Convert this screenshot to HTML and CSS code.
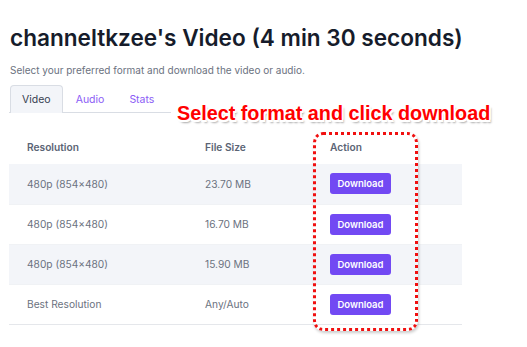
FILE: index.html
```html
<!DOCTYPE html>
<html lang="en">
  <head>
    <meta charset="UTF-8" />
    <title>channeltkzee's Video</title>
    <link rel="stylesheet" href="styles.css">
  </head>
  <body>
    <div class="page">
      <h1 class="title">channeltkzee's Video (4 min 30 seconds)</h1>
      <p class="subtitle">Select your preferred format and download the video or audio.</p>

      <div class="tabs">
        <span class="tab active">Video</span>
        <span class="tab">Audio</span>
        <span class="tab">Stats</span>
      </div>

      <table class="formats">
        <thead>
          <tr>
            <th class="col-res">Resolution</th>
            <th class="col-size">File Size</th>
            <th class="col-action">Action</th>
          </tr>
        </thead>
        <tbody>
          <tr class="striped">
            <td>480p (854×480)</td>
            <td>23.70 MB</td>
            <td><button class="btn">Download</button></td>
          </tr>
          <tr>
            <td>480p (854×480)</td>
            <td>16.70 MB</td>
            <td><button class="btn">Download</button></td>
          </tr>
          <tr class="striped">
            <td>480p (854×480)</td>
            <td>15.90 MB</td>
            <td><button class="btn">Download</button></td>
          </tr>
          <tr>
            <td>Best Resolution</td>
            <td>Any/Auto</td>
            <td><button class="btn">Download</button></td>
          </tr>
        </tbody>
      </table>

      <!-- annotation overlay -->
      <div class="callout">Select format and click download</div>
      <div class="highlight"></div>
    </div>
  </body>
</html>
```

FILE: styles.css
```css
* {
  box-sizing: border-box;
}

body {
  margin: 0;
  padding: 0;
  background: #ffffff;
  font-family: Inter, "Noto Sans", sans-serif;
}

.page {
  position: relative;
  padding: 23px 0 0 9px;
  width: 527px;
  height: 347px;
}

.title {
  margin: 0 0 0 1px;
  font-size: 22.6px;
  font-weight: 600;
  color: #161c2b;
  line-height: 30px;
}

.subtitle {
  margin: 10px 0 0 1px;
  font-size: 10px;
  color: #6b7280;
  line-height: 14px;
}

.tabs {
  display: flex;
  margin-top: 8px;
  width: 453px;
  border-bottom: 1px solid #d9dde4;
}

.tab {
  height: 28px;
  padding: 0 11px;
  display: flex;
  align-items: center;
  font-size: 10.5px;
  color: #8b5cf6;
  border: 1px solid transparent;
  border-bottom: none;
  margin-bottom: -1px;
}

.tab + .tab {
  padding-left: 12px;
}

.tab.active {
  margin-left: 1px;
  color: #374151;
  background: #f3f5f9;
  border-color: #d9dde4;
  border-radius: 4px 4px 0 0;
}

.formats {
  margin-top: 16px;
  width: 453px;
  table-layout: fixed;
  border-collapse: collapse;
  font-size: 10.2px;
  color: #6b7280;
}

.formats th,
.formats td {
  padding: 0 0 0 18px;
  text-align: left;
}

.formats th {
  height: 35px;
  font-weight: 600;
  color: #5b6475;
}

.formats td {
  height: 40px;
}

.col-res {
  width: 178px;
}

.col-size {
  width: 125px;
}

.col-action {
  width: 150px;
}

.formats tbody tr {
  border-bottom: 1px solid #f0f2f5;
}

.formats tbody tr:last-child {
  border-bottom: 1px solid #e5e7eb;
}

.formats tr.striped {
  background: #f3f5f9;
}

.btn {
  display: block;
  width: 61px;
  height: 21px;
  border: none;
  border-radius: 3px;
  background: #7249f3;
  color: #ffffff;
  font-family: Inter, "Noto Sans", sans-serif;
  font-size: 9.5px;
  font-weight: 600;
  padding: 0;
}

.callout {
  position: absolute;
  left: 171px;
  top: 100px;
  padding: 2px 6px;
  background: #ffffff;
  font-family: "Liberation Sans", Arial, sans-serif;
  font-weight: 700;
  font-size: 19.8px;
  line-height: 23px;
  color: #ff0000;
  text-shadow:
    -1.5px 0 #fff, 1.5px 0 #fff, 0 -1.5px #fff, 0 1.5px #fff,
    -1.5px -1.5px #fff, 1.5px 1.5px #fff, -1.5px 1.5px #fff, 1.5px -1.5px #fff,
    2px 2.5px 2px rgba(0, 0, 0, 0.35);
}

.highlight {
  position: absolute;
  left: 313px;
  top: 132px;
  width: 105px;
  height: 199px;
  border: 3px dotted #f01010;
  border-radius: 10px;
  box-shadow: 1px 2px 3px rgba(0, 0, 0, 0.2);
}
```
